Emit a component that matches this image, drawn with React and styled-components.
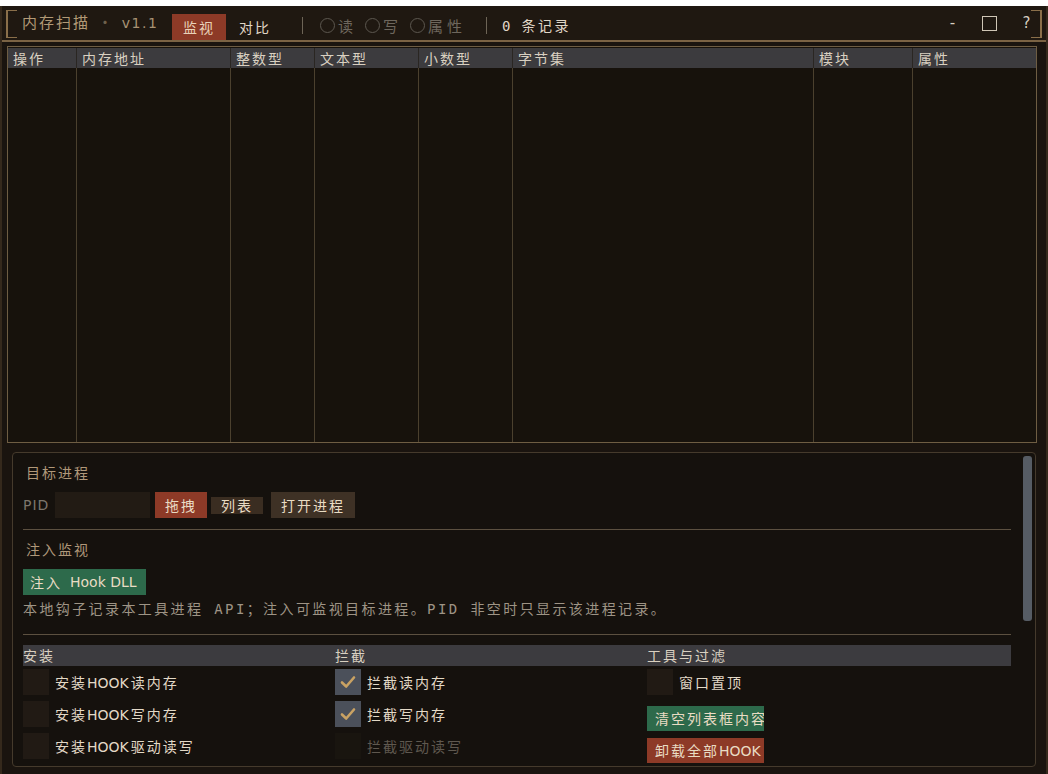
import React from "react";
import styled, { createGlobalStyle, css } from "styled-components";

const GlobalStyle = createGlobalStyle`
  html, body {
    margin: 0;
    padding: 0;
    background: #ffffff;
  }
  body {
    font-family: "Noto Sans CJK SC", "DejaVu Sans", sans-serif;
  }
  * {
    box-sizing: border-box;
  }
`;

const columns = [
  { title: "操作", width: "69px" },
  { title: "内存地址", width: "154px" },
  { title: "整数型", width: "84px" },
  { title: "文本型", width: "104px" },
  { title: "小数型", width: "94px" },
  { title: "字节集", width: "301px" },
  { title: "模块", width: "99px" },
  { title: "属性", width: "1fr" },
];

const gridCols = columns.map((c) => c.width).join(" ");

const installRows = [
  { label: "安装HOOK读内存" },
  { label: "安装HOOK写内存" },
  { label: "安装HOOK驱动读写" },
];

const blockRows = [
  { label: "拦截读内存", checked: true },
  { label: "拦截写内存", checked: true },
  { label: "拦截驱动读写", disabled: true },
];

// latin runs inside CJK labels are drawn tighter
const Mixed = ({ text }) =>
  text.split(/([A-Za-z]+)/).map((part, i) =>
    /^[A-Za-z]+$/.test(part) ? <Latin key={i}>{part}</Latin> : part
  );

const App = () => {
  return (
    <>
      <GlobalStyle />
      <Window>
        <TitleBar>
          <Corner $side="left" />
          <Corner $side="right" />
          <AppTitle>
            内存扫描 <Dot>·</Dot> <Version>v1.1</Version>
          </AppTitle>
          <Tab $active>监视</Tab>
          <Tab>对比</Tab>
          <Sep />
          <RadioGroup>
            {["读", "写", "属性"].map((it) => (
              <Radio key={it}>
                <span className="ring" />
                {it}
              </Radio>
            ))}
          </RadioGroup>
          <Sep $narrow />
          <Count>
            <span className="num">0</span> 条记录
          </Count>
          <WinControls>
            <WinBtn>-</WinBtn>
            <WinBtn>
              <span className="box" />
            </WinBtn>
            <WinBtn>?</WinBtn>
          </WinControls>
        </TitleBar>

        <Table>
          <HeadRow>
            {columns.map((c) => (
              <HeadCell key={c.title}>{c.title}</HeadCell>
            ))}
          </HeadRow>
          <Body>
            {columns.map((c) => (
              <BodyCol key={c.title} />
            ))}
          </Body>
        </Table>

        <Panel>
          <PanelContent>
            <SectionTitle>目标进程</SectionTitle>
            <PidRow>
              <PidLabel>PID</PidLabel>
              <PidInput />
              <Button $tone="red">拖拽</Button>
              <Button $tone="dark" $small>
                列表
              </Button>
              <Button $tone="brown" $wide>
                打开进程
              </Button>
            </PidRow>
            <Divider />
            <SectionTitle $gap="9px">注入监视</SectionTitle>
            <Button $tone="green" $pad="7px">
              注入<Latin $wide>Hook DLL</Latin>
            </Button>
            <Hint>
              本地钩子记录本工具进程 API；注入可监视目标进程。PID 非空时只显示该进程记录。
            </Hint>
            <Divider $top="14px" />
            <OptionGrid>
              <GroupHead>安装</GroupHead>
              <GroupHead>拦截</GroupHead>
              <GroupHead>工具与过滤</GroupHead>
              <OptionCol>
                {installRows.map((r) => (
                  <Check key={r.label} label={r.label} />
                ))}
              </OptionCol>
              <OptionCol>
                {blockRows.map((r) => (
                  <Check
                    key={r.label}
                    label={r.label}
                    checked={r.checked}
                    disabled={r.disabled}
                  />
                ))}
              </OptionCol>
              <OptionCol>
                <Check label="窗口置顶" />
                <ClipButton $tone="green" $mt="5px">
                  清空列表框内容
                </ClipButton>
                <ClipButton $tone="red" $mt="1px">
                  <Mixed text="卸载全部HOOK" />
                </ClipButton>
              </OptionCol>
            </OptionGrid>
          </PanelContent>
          <ScrollTrack>
            <ScrollThumb />
          </ScrollTrack>
        </Panel>
      </Window>
    </>
  );
};

const Check = ({ label, checked, disabled }) => (
  <CheckRow $disabled={disabled}>
    <Box $checked={checked} $disabled={disabled}>
      {checked && (
        <svg width="18" height="18" viewBox="0 0 18 18">
          <path
            d="M3 9.5 L7.2 13.5 L15 4.5"
            fill="none"
            stroke="#c9a263"
            strokeWidth="2.6"
            strokeLinecap="round"
            strokeLinejoin="round"
          />
        </svg>
      )}
    </Box>
    <span className="text">
      <Mixed text={label} />
    </span>
  </CheckRow>
);

export default App;

const spaced = css`
  font-size: 14px;
  letter-spacing: 2px;
`;

const Latin = styled.span`
  font-family: "DejaVu Sans", sans-serif;
  letter-spacing: 0;
  margin-left: ${({ $wide }) => ($wide ? "8px" : "0")};
  margin-right: 2px;
`;

const Window = styled.div`
  margin-top: 6px;
  height: 768px;
  background: #1a140f;
  border-left: 2px solid #35291c;
  border-right: 2px solid #35291c;
  display: flex;
  flex-direction: column;
  overflow: hidden;
`;

const TitleBar = styled.div`
  position: relative;
  height: 36px;
  flex-shrink: 0;
  display: flex;
  align-items: center;
  padding-left: 20px;
  background: #1f1811;
  border-bottom: 2px solid #7b6344;
`;

const Corner = styled.div`
  position: absolute;
  top: 4px;
  bottom: 2px;
  width: 11px;
  border-top: 1px solid #8a6f4a;
  border-bottom: 1px solid #8a6f4a;
  ${({ $side }) =>
    $side === "left"
      ? css`
          left: 4px;
          border-left: 2px solid #8a6f4a;
        `
      : css`
          right: 4px;
          border-right: 2px solid #8a6f4a;
        `}
`;

const AppTitle = styled.div`
  font-size: 15px;
  letter-spacing: 2px;
  color: #b29a76;
  margin-top: -4px;
  width: 150px;
  white-space: nowrap;
`;

const Dot = styled.span`
  color: #6f604c;
  margin: 0 2px;
`;

const Version = styled.span`
  font-family: "DejaVu Sans", sans-serif;
  font-size: 14px;
  letter-spacing: 1.5px;
  color: #a89274;
`;

const Tab = styled.div`
  align-self: flex-end;
  height: 26px;
  padding: 0 11px;
  display: flex;
  align-items: center;
  ${spaced}
  color: ${({ $active }) => ($active ? "#e9d2b8" : "#e0d6c6")};
  background: ${({ $active }) => ($active ? "#8d3a27" : "transparent")};
  margin-right: 2px;
`;

const Sep = styled.div`
  width: 1px;
  height: 17px;
  margin: 4px ${({ $narrow }) => ($narrow ? "15px" : "17px")} 0
    ${({ $narrow }) => ($narrow ? "20px" : "18px")};
  background: #6d6456;
`;

const RadioGroup = styled.div`
  display: flex;
  gap: 8px;
  margin-top: 4px;
`;

const Radio = styled.div`
  display: flex;
  align-items: center;
  font-size: 15px;
  letter-spacing: 4px;
  color: #6e675d;

  .ring {
    width: 15px;
    height: 15px;
    border: 1px solid #5c574f;
    border-radius: 50%;
    margin-right: 3px;
  }
`;

const Count = styled.div`
  font-size: 14px;
  letter-spacing: 2.5px;
  color: #e0d6c6;
  margin-top: 4px;

  .num {
    font-family: "DejaVu Sans Mono", monospace;
    margin-right: 3px;
  }
`;

const WinControls = styled.div`
  margin-left: auto;
  display: flex;
  align-items: center;
  margin-right: 1px;
`;

const WinBtn = styled.div`
  width: 37px;
  display: flex;
  justify-content: center;
  font-family: "DejaVu Sans", sans-serif;
  font-size: 15px;
  color: #d8cfc0;

  .box {
    width: 15px;
    height: 15px;
    border: 1px solid #cfc6b6;
  }
`;

const Table = styled.div`
  margin: 4px 9px 0 5px;
  height: 397px;
  flex-shrink: 0;
  border: 1px solid #6e5d43;
  padding-top: 1px;
  display: flex;
  flex-direction: column;
  background: #17120c;
`;

const HeadRow = styled.div`
  display: grid;
  grid-template-columns: ${gridCols};
  height: 20px;
  background: #3c3b3e;
`;

const HeadCell = styled.div`
  ${spaced}
  color: #d9d0c1;
  line-height: 20px;
  padding-left: 5px;
  border-right: 1px solid #2a2622;
  white-space: nowrap;
  &:last-child {
    border-right: none;
  }
`;

const Body = styled.div`
  flex: 1;
  display: grid;
  grid-template-columns: ${gridCols};
`;

const BodyCol = styled.div`
  border-right: 1px solid #4b402e;
  &:last-child {
    border-right: none;
  }
`;

const Panel = styled.div`
  margin: 9px 10px 0 10px;
  height: 315px;
  flex-shrink: 0;
  display: flex;
  border: 1px solid #453a2c;
  border-radius: 4px;
  background: #15110d;
  overflow: hidden;
`;

const PanelContent = styled.div`
  flex: 1;
  padding: 9px 10px 0 10px;
  overflow: hidden;
`;

const ScrollTrack = styled.div`
  width: 14px;
  padding: 3px 3px 0 2px;
`;

const ScrollThumb = styled.div`
  height: 165px;
  border-radius: 3px;
  background: #565c64;
`;

const SectionTitle = styled.div`
  ${spaced}
  color: #b0987a;
  line-height: 20px;
  padding-left: 3px;
  margin-top: ${({ $gap }) => $gap || "0"};
  margin-bottom: 10px;
`;

const PidRow = styled.div`
  display: flex;
  align-items: center;
  height: 26px;
`;

const PidLabel = styled.span`
  font-family: "DejaVu Sans", sans-serif;
  font-size: 14px;
  letter-spacing: 1px;
  color: #7d766c;
  width: 32px;
`;

const PidInput = styled.div`
  width: 95px;
  height: 26px;
  background: #221b14;
  margin-right: 5px;
`;

const tones = {
  red: "#8d3a27",
  green: "#2d6a4b",
  dark: "#3a2d21",
  brown: "#3e3125",
};

const Button = styled.div`
  height: ${({ $small }) => ($small ? "17px" : "26px")};
  display: inline-flex;
  align-items: center;
  padding: 0 ${({ $pad }) => $pad || "10px"};
  margin-right: ${({ $small }) => ($small ? "8px" : "4px")};
  background: ${({ $tone }) => tones[$tone]};
  ${spaced}
  color: #e9dcc4;
  white-space: nowrap;
`;

const Divider = styled.div`
  height: 1px;
  background: #5c5040;
  margin: ${({ $top }) => $top || "11px"} 0 0;
`;

const Hint = styled.div`
  font-family: "DejaVu Sans Mono", "Noto Sans CJK SC", monospace;
  font-size: 14px;
  letter-spacing: 2.4px;
  color: #9e9485;
  line-height: 22px;
  margin-top: 3px;
  white-space: nowrap;
`;

const OptionGrid = styled.div`
  margin-top: 10px;
  display: grid;
  grid-template-columns: 312px 312px 1fr;
  align-items: start;
`;

const GroupHead = styled.div`
  height: 21px;
  line-height: 21px;
  background: #3c3b3f;
  ${spaced}
  color: #d9d0c1;
  margin-bottom: 3px;
`;

const OptionCol = styled.div`
  display: flex;
  flex-direction: column;
  gap: 6px;
`;

const CheckRow = styled.div`
  display: flex;
  align-items: center;
  height: 26px;
  ${spaced}
  color: ${({ $disabled }) => ($disabled ? "#5f584f" : "#e3d9c7")};

  .text {
    margin-left: 6px;
  }
`;

const Box = styled.div`
  width: 26px;
  height: 26px;
  display: flex;
  align-items: center;
  justify-content: center;
  background: ${({ $checked, $disabled }) =>
    $checked ? "#4b505a" : $disabled ? "#19150f" : "#211a14"};
`;

const ClipButton = styled.div`
  width: 117px;
  height: 25px;
  margin-top: ${({ $mt }) => $mt};
  background: ${({ $tone }) => tones[$tone]};
  ${spaced}
  color: #e9dcc4;
  line-height: 25px;
  padding-left: 8px;
  white-space: nowrap;
  overflow: hidden;
`;
